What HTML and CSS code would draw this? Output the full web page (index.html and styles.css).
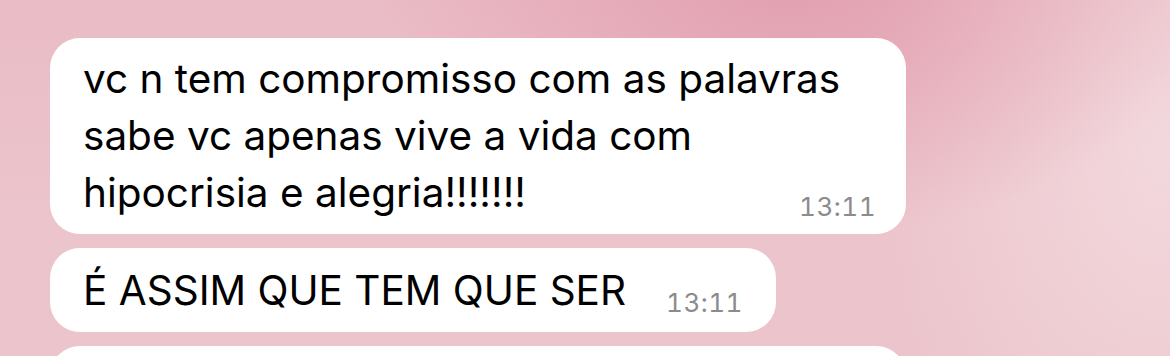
FILE: index.html
```html
<!DOCTYPE html>
<html lang="pt">
<head>
<meta charset="utf-8">
<link rel="stylesheet" href="styles.css">
</head>
<body>
<main class="chat">
  <div class="bubble bubble-wide">
    <p class="text">vc n tem compromisso com as palavras sabe vc apenas vive a vida com hipocrisia e alegria!!!!!!!</p>
    <span class="time">13:11</span>
  </div>
  <div class="bubble bubble-inline">
    <p class="text">É ASSIM QUE TEM QUE SER</p>
    <span class="time">13:11</span>
  </div>
  <div class="bubble bubble-wide bubble-cut"></div>
</main>
</body>
</html>
```
FILE: styles.css
```css
* { box-sizing: border-box; }
html, body {
  margin: 0;
  width: 1170px;
  height: 356px;
  overflow: hidden;
}
body {
  font-family: "Inter", "Liberation Sans", sans-serif;
  background:
    radial-gradient(ellipse 420px 260px at 790px -20px, rgba(224, 150, 168, 0.75), rgba(224, 150, 168, 0) 100%),
    radial-gradient(ellipse 300px 400px at 1170px 150px, rgba(244, 222, 226, 0.8), rgba(244, 222, 226, 0) 100%),
    linear-gradient(180deg, #eabcc5 0%, #ecc4cb 60%, #ebc5cb 100%);
}
.chat {
  display: flex;
  flex-direction: column;
  align-items: flex-start;
  gap: 14px;
  padding: 38px 0 0 50px;
}
.bubble {
  background: #fff;
  border-radius: 30px;
}
.text {
  margin: 0;
  font-size: 40.5px;
  line-height: 57px;
  color: #000;
}
.time {
  font-size: 26px;
  line-height: 30px;
  color: #8b8b8e;
  letter-spacing: 0.5px;
  font-variant-numeric: tabular-nums;
  white-space: nowrap;
}
.bubble-wide {
  width: 856px;
  display: grid;
  padding: 12px 30px 13px 33px;
}
.bubble-wide > * {
  grid-area: 1 / 1;
}
.bubble-wide .text {
  width: 700px;
  width: fit-content;
  max-width: 760px;
}
.bubble-wide .time {
  justify-self: end;
  align-self: end;
  margin-bottom: -1px;
}
.bubble-inline {
  display: flex;
  align-items: flex-end;
  gap: 40px;
  padding: 14px 33px 13px 33px;
}
.bubble-inline .time {
  margin-bottom: 1px;
}
.bubble-cut {
  height: 60px;
}
```
